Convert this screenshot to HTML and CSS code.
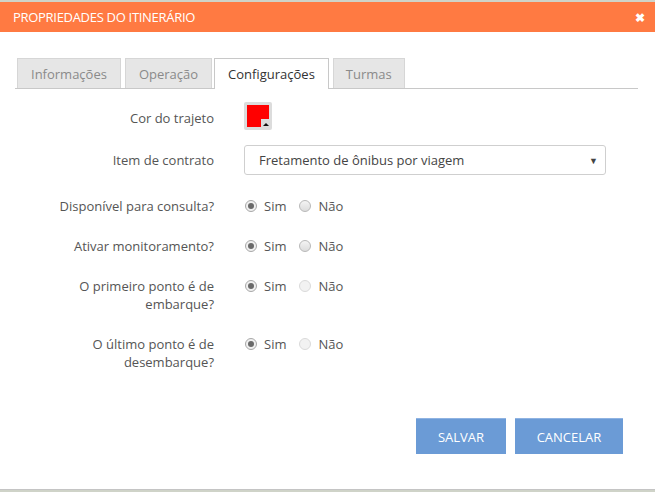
FILE: index.html
```html
<!DOCTYPE html>
<html lang="pt">
<head>
<meta charset="utf-8">
<link rel="stylesheet" href="styles.css">
</head>
<body>
<div class="dialog">
  <div class="header">
    <span class="title">PROPRIEDADES DO ITINERÁRIO</span>
    <span class="close">✖</span>
  </div>
  <div class="body">
    <div class="tabs">
      <div class="tab">Informações</div>
      <div class="tab tab-op">Operação</div>
      <div class="tab active">Configurações</div>
      <div class="tab tab-last">Turmas</div>
    </div>
    <div class="form">
      <div class="row r-color">
        <div class="label">Cor do trajeto</div>
        <div class="ctrl">
          <div class="swatch"><div class="red"></div><div class="corner"><span class="tri"></span></div></div>
        </div>
      </div>
      <div class="row r-select">
        <div class="label">Item de contrato</div>
        <div class="ctrl">
          <div class="select"><span>Fretamento de ônibus por viagem</span><span class="arrow">▼</span></div>
        </div>
      </div>
      <div class="row r-radio r3">
        <div class="label">Disponível para consulta?</div>
        <div class="ctrl radios">
          <span class="radio checked"></span><span class="opt">Sim</span>
          <span class="radio"></span><span class="opt">Não</span>
        </div>
      </div>
      <div class="row r-radio r4">
        <div class="label">Ativar monitoramento?</div>
        <div class="ctrl radios">
          <span class="radio checked"></span><span class="opt">Sim</span>
          <span class="radio"></span><span class="opt">Não</span>
        </div>
      </div>
      <div class="row r-radio r5">
        <div class="label">O primeiro ponto é de<br>embarque?</div>
        <div class="ctrl radios">
          <span class="radio checked"></span><span class="opt">Sim</span>
          <span class="radio disabled"></span><span class="opt">Não</span>
        </div>
      </div>
      <div class="row r-radio r6">
        <div class="label">O último ponto é de<br>desembarque?</div>
        <div class="ctrl radios">
          <span class="radio checked"></span><span class="opt">Sim</span>
          <span class="radio disabled"></span><span class="opt">Não</span>
        </div>
      </div>
    </div>
    <div class="buttons">
      <div class="btn btn-save">SALVAR</div>
      <div class="btn btn-cancel">CANCELAR</div>
    </div>
  </div>
</div>
</body>
</html>
```
FILE: styles.css
```css
html, body {
  margin: 0;
  padding: 0;
}
body {
  width: 655px;
  height: 492px;
  overflow: hidden;
  background: #cfd3c8;
  font-family: "Open Sans", "Liberation Sans", sans-serif;
  font-size: 13px;
  color: #555;
}
.dialog {
  margin-top: 2px;
  height: 487px;
  background: #fff;
  border-bottom: 1px solid #c4c4c4;
}
.header {
  height: 30px;
  background: #ff7a42;
  color: #fff;
  display: flex;
  align-items: center;
  justify-content: space-between;
  padding: 0 10px 0 13px;
}
.title {
  font-size: 13px;
  letter-spacing: -0.3px;
}
.close {
  font-size: 12px;
  font-weight: bold;
}
.body {
  padding: 26px 17px 0 15px;
}
.tabs {
  display: flex;
  gap: 4px;
  padding-left: 2px;
  height: 30px;
  border-bottom: 1px solid #c8c8c8;
  box-sizing: content-box;
}
.tab {
  height: 30px;
  box-sizing: border-box;
  border: 1px solid #d6d6d6;
  border-bottom: none;
  background: #e6e6e6;
  color: #8a8a8a;
  line-height: 30px;
  padding: 0 13px;
}
.tab-op {
  margin-right: -2px;
}
.tab-last {
  padding: 0 12px;
}
.tab.active {
  background: #fff;
  color: #333;
  border-color: #c8c8c8;
  height: 31px;
  margin-bottom: -1px;
}
.form {
  display: flex;
  flex-direction: column;
}
.row {
  display: grid;
  grid-template-columns: 199px 1fr;
  column-gap: 30px;
  align-items: start;
}
.label {
  text-align: right;
  color: #555;
  line-height: 18px;
}
.r-color {
  margin-top: 13px;
  height: 28px;
  align-items: center;
}
.r-color .label {
  padding-top: 4px;
}
.r-select {
  margin-top: 15px;
  height: 30px;
  align-items: center;
}
.r-radio .label {
  padding-top: 1px;
}
.r3 { margin-top: 21px; }
.r4 { margin-top: 20px; }
.r5 { margin-top: 20px; }
.r6 { margin-top: 22px; }
.r5, .r6 { height: 36px; }
.swatch {
  width: 28px;
  height: 28px;
  background: #dcdcdc;
  border-radius: 2px;
  position: relative;
}
.red {
  position: absolute;
  left: 3px;
  top: 3px;
  width: 22px;
  height: 22px;
  background: #ff0000;
}
.corner {
  position: absolute;
  left: 17px;
  top: 17px;
  width: 9px;
  height: 9px;
  background: #dcdcdc;
  display: flex;
  align-items: center;
  justify-content: center;
}
.tri {
  width: 0;
  height: 0;
  border-left: 3px solid transparent;
  border-right: 3px solid transparent;
  border-bottom: 3px solid #111;
  margin-top: 2px;
}
.select {
  width: 362px;
  height: 30px;
  box-sizing: border-box;
  border: 1px solid #cfcfcf;
  border-radius: 3px;
  display: flex;
  align-items: center;
  justify-content: space-between;
  padding: 0 7px 0 14px;
  color: #444;
}
.arrow {
  font-size: 9px;
  color: #444;
}
.radios {
  display: flex;
  align-items: center;
  height: 20px;
}
.radio {
  width: 12px;
  height: 12px;
  box-sizing: border-box;
  border-radius: 50%;
  border: 1px solid #b8b8b8;
  background: linear-gradient(#f4f4f4, #dcdcdc);
  margin-left: 1px;
  margin-right: 7px;
  position: relative;
}
.radio.checked {
  background: #f0f0f0;
  border-color: #a8a8a8;
}
.radio.checked::after {
  content: "";
  position: absolute;
  left: 2px;
  top: 2px;
  width: 6px;
  height: 6px;
  border-radius: 50%;
  background: #6a6a6a;
}
.radio.disabled {
  border-color: #dadada;
  background: #f2f2f2;
}
.opt {
  color: #555;
  margin-right: 12px;
}
.buttons {
  display: flex;
  justify-content: flex-end;
  gap: 9px;
  margin-top: 48px;
  padding-right: 15px;
}
.btn {
  height: 36px;
  line-height: 36px;
  background: #6b9bd6;
  border-top: 1px solid #8fb3e2;
  box-sizing: border-box;
  color: #fff;
  text-align: center;
  font-size: 13px;
}
.btn-save { width: 90px; }
.btn-cancel { width: 108px; }
```
